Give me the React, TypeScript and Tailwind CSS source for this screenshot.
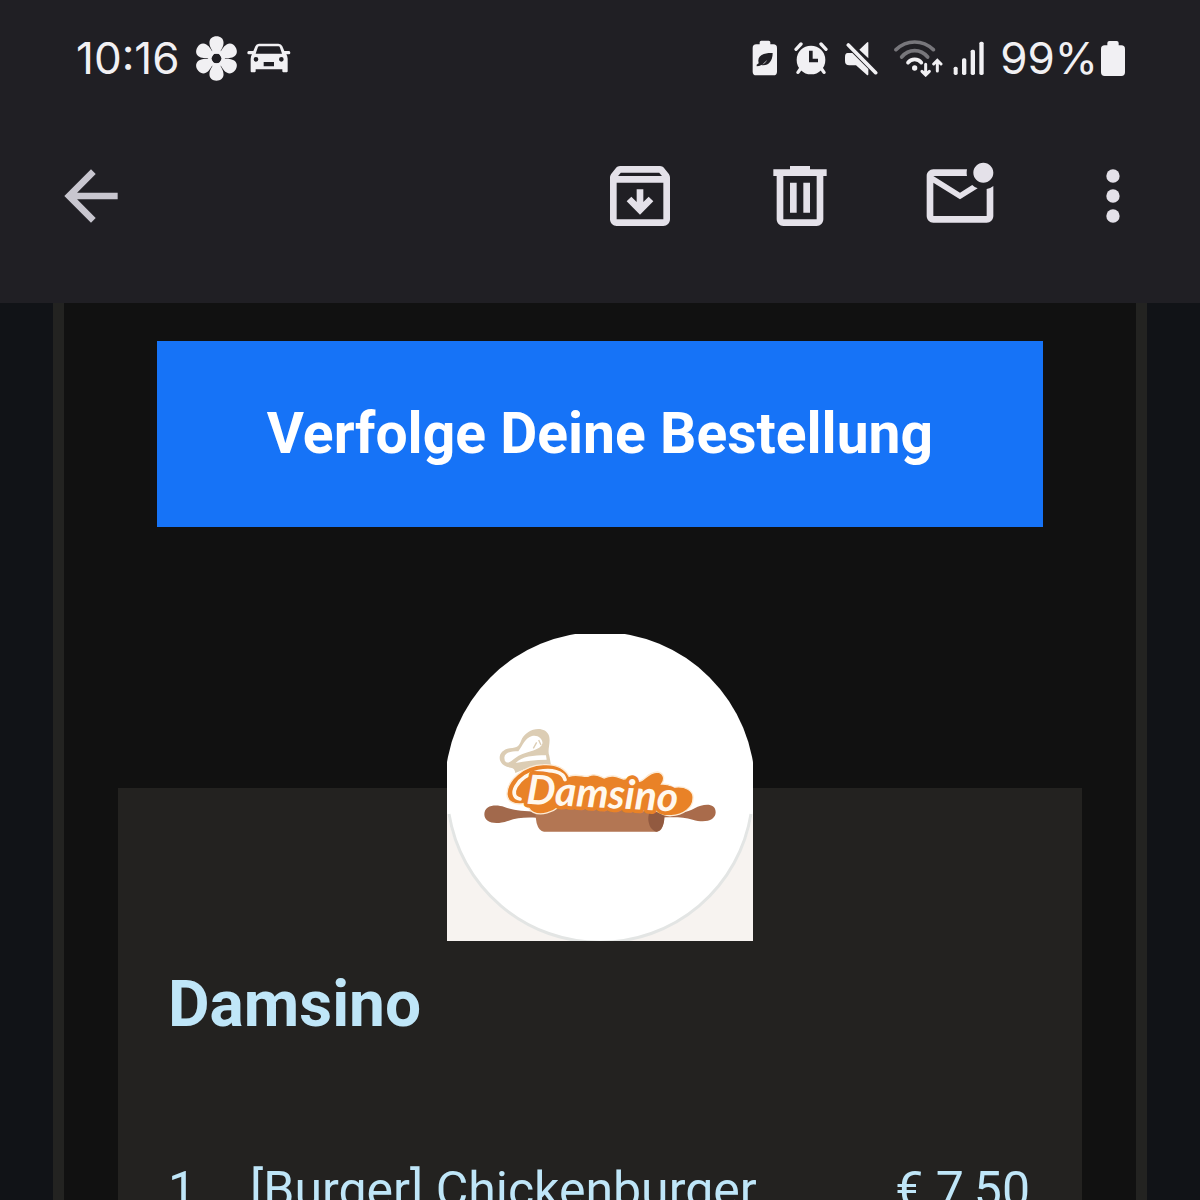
import type { ReactNode } from "react";

type OrderItem = {
  quantity: number;
  name: string;
  price: number;
};

const items: OrderItem[] = [{ quantity: 1, name: "[Burger] Chickenburger", price: 7.5 }];

const petals = [0, 60, 120, 180, 240, 300];

function formatPrice(value: number) {
  return `€ ${value.toFixed(2).replace(".", ",")}`;
}

function FlowerIcon() {
  return (
    <svg viewBox="-64 -67 128 134" className="h-[45px] w-[43px]" fill="currentColor" aria-hidden="true">
      {petals.map((angle) => (
        <path
          key={angle}
          transform={`rotate(${angle})`}
          d="M-9-14C-13-27-21-34-21-47C-21-59-12-66 0-66S21-59 21-47C21-34 13-27 9-14Z"
        />
      ))}
      <path fillRule="evenodd" d="M0-25a25 25 0 1 0 0 50a25 25 0 1 0 0-50ZM0-15a15 15 0 1 1 0 30a15 15 0 1 1 0-30Z" />
    </svg>
  );
}

function CarIcon() {
  return (
    <svg viewBox="560 70 135 90" className="h-[30px] w-[45px]" fill="currentColor" aria-hidden="true">
      <path
        fillRule="evenodd"
        d="M599 72h58q9 0 12 8l6 14h14q4 0 4 5t-4 5h-8q4 6 4 13v38q0 3-3 3h-10q-3 0-3-3v-6h-80v6q0 3-3 3h-9q-3 0-3-3v-38q0-7 4-13h-10q-4 0-4-5t4-5h14l6-14q3-8 11-8ZM600 80q-4 0-5 4l-6 18h79l-6-18q-1-4-5-4ZM590 112a7 7 0 1 0 0 14a7 7 0 1 0 0-14ZM666 112a7 7 0 1 0 0 14a7 7 0 1 0 0-14ZM613 127v13h31v-13Z"
      />
    </svg>
  );
}

function PowerSavingIcon() {
  return (
    <svg viewBox="34 45 78 108" className="h-[36px] w-[26px]" fill="currentColor" aria-hidden="true">
      <path
        fillRule="evenodd"
        d="M62 47h22q5 0 5 5v6h9q11 0 11 11v71q0 11-11 11H47q-11 0-11-11V69q0-11 11-11h10v-6q0-5 5-5ZM96 84c-25-1-44 6-43 24l1 7-6 4v5c16-1 20-9 32-20-5 9-11 13-18 16 19 4 34-10 34-36Z"
      />
    </svg>
  );
}

function AlarmIcon() {
  return (
    <svg viewBox="164 46 102 102" className="size-[34px]" fill="currentColor" aria-hidden="true">
      <path fillRule="evenodd" d="M215 60a43 43 0 1 0 0 86a43 43 0 1 0 0-86ZM209 75h11v24h16v11h-27Z" />
      <path
        d="M170 71l15-16M260 71l-15-16M183 130l-7 10M247 130l7 10"
        stroke="currentColor"
        strokeWidth="10"
        strokeLinecap="round"
      />
    </svg>
  );
}

function MuteIcon() {
  return (
    <svg viewBox="314 45 102 105" className="h-[35px] w-[34px]" fill="currentColor" aria-hidden="true">
      <path d="M387 50v47l-27-26 22-21q5-4 5 0ZM325 81h14l48 48v15q0 6-5 2l-32-28h-20q-13 0-13-13v-12q0-12 8-12Z" />
      <path d="M327 57l82 83" stroke="currentColor" strokeWidth="11" strokeLinecap="round" />
    </svg>
  );
}

function WifiIcon() {
  return (
    <svg
      viewBox="462 43 147 111"
      className="h-[37px] w-[49px]"
      fill="none"
      stroke="currentColor"
      strokeWidth="11"
      strokeLinecap="round"
      aria-hidden="true"
    >
      <path d="M468 72Q492 49 524 49T580 72" className="text-[#77767b]" stroke="currentColor" />
      <path d="M485 94Q501 75 524 75T563 94" className="text-[#77767b]" stroke="currentColor" />
      <path d="M504 111Q511 101 524 101T544 111" />
      <circle cx="524" cy="127" r="8" fill="currentColor" stroke="none" />
      <path d="M557 116v31M546 137l11 11 11-11M592 136v-31M581 115l11-11 11 11" strokeWidth="9" />
    </svg>
  );
}

function SignalIcon() {
  return (
    <svg viewBox="68 45 93 105" className="h-[35px] w-[31px]" fill="currentColor" aria-hidden="true">
      <rect x="70" y="122" width="12" height="25" rx="5" />
      <rect x="95" y="97" width="13" height="50" rx="5" />
      <rect x="121" y="71" width="13" height="76" rx="5" />
      <rect x="147" y="47" width="13" height="100" rx="5" />
    </svg>
  );
}

function BatteryIcon() {
  return (
    <svg viewBox="513 45 72 105" className="h-[35px] w-[24px]" fill="currentColor" aria-hidden="true">
      <path d="M538 45h22q6 0 6 6v7h8q11 0 11 11v70q0 11-11 11h-50q-11 0-11-11V69q0-11 11-11h8v-7q0-6 6-6Z" />
    </svg>
  );
}

type ActionButtonProps = {
  label: string;
  children: ReactNode;
};

function ActionButton({ label, children }: ActionButtonProps) {
  return (
    <button type="button" aria-label={label} className="size-20 shrink-0">
      <svg viewBox="0 0 24 24" className="size-20" fill="currentColor" aria-hidden="true">
        {children}
      </svg>
    </button>
  );
}

function StatusBar() {
  return (
    <div className="flex h-[116px] items-center justify-between pr-[75px] pl-[76px] font-['Inter',sans-serif] text-[44px] leading-[56px] text-[#f1f0f3]">
      <div className="flex items-center">
        <time className="mr-[15px]">10:16</time>
        <FlowerIcon />
        <span className="ml-2">
          <CarIcon />
        </span>
      </div>
      <div className="flex items-center gap-4">
        <PowerSavingIcon />
        <AlarmIcon />
        <MuteIcon />
        <div className="flex items-center gap-[10px]">
          <WifiIcon />
          <SignalIcon />
        </div>
        <div className="flex items-center gap-[3px]">
          <span>99%</span>
          <BatteryIcon />
        </div>
      </div>
    </div>
  );
}

function MailToolbar() {
  return (
    <nav className="flex h-[187px] items-center justify-between pr-[47px] pb-[27px] pl-[51px] text-[#e4e1e9]">
      <div className="flex text-[#c8c6cf]">
        <ActionButton label="Zurück">
          <path d="M20 11H7.83l5.59-5.59L12 4l-8 8 8 8 1.41-1.41L7.83 13H20v-2z" />
        </ActionButton>
      </div>
      <div className="flex items-center gap-20">
        <ActionButton label="Archivieren">
          <path
            fillRule="evenodd"
            d="M20.54 5.23l-1.39-1.68C18.88 3.21 18.47 3 18 3H6c-.47 0-.88.21-1.16.55L3.46 5.23C3.17 5.57 3 6.02 3 6.5V19c0 1.1.9 2 2 2h14c1.1 0 2-.9 2-2V6.5c0-.48-.17-.93-.46-1.27zM6.24 5h11.52l.83 1H5.42l.82-1zM5 19V8h14v11H5z"
          />
          <path d="M11 10h2v3.8l1.6-1.6 1.4 1.4-4 4-4-4 1.4-1.4 1.6 1.6z" />
        </ActionButton>
        <ActionButton label="Löschen">
          <path
            fillRule="evenodd"
            d="M9 3h6v1h5v2h-1v13c0 1.1-.9 2-2 2H7c-1.1 0-2-.9-2-2V6H4V4h5zM7 6v13h10V6zM9 8h2v9H9zM13 8h2v9h-2z"
          />
        </ActionButton>
        <div className="flex items-center gap-[73px]">
          <ActionButton label="Als ungelesen markieren">
            <path d="M22 8.98V18c0 1.1-.9 2-2 2H4c-1.1 0-2-.9-2-2V6c0-1.1.9-2 2-2h10.1c-.06.32-.1.66-.1 1 0 .34.04.68.1 1H4l8 5 3.67-2.29c.47.43 1.02.76 1.63.98L12 13 4 8v10h16V9.9c.74-.15 1.42-.48 2-.92zM16 5c0 1.66 1.34 3 3 3s3-1.34 3-3-1.34-3-3-3-3 1.34-3 3z" />
          </ActionButton>
          <ActionButton label="Weitere Optionen">
            <circle cx="12" cy="6" r="2" />
            <circle cx="12" cy="12" r="2" />
            <circle cx="12" cy="18" r="2" />
          </ActionButton>
        </div>
      </div>
    </nav>
  );
}

function RestaurantLogo() {
  return (
    <svg viewBox="0 0 306 307" className="h-[307px] w-[306px]" role="img" aria-label="Damsino">
      <rect y="153" width="306" height="154" fill="#f7f3f0" />
      <circle cx="153" cy="153" r="155" fill="#fff" />
      <path d="M2 180a153 153 0 0 0 302 0" fill="none" stroke="#e3e5e4" strokeWidth="3" />
      <svg x="23" y="81" width="260" height="130" viewBox="0 0 780 390">
        {/* rolling pin */}
        <path
          d="M43 298C43 270 78 267 103 276C130 286 160 288 200 290V308C165 306 140 308 113 318C75 331 43 323 43 298Z"
          fill="#a2694c"
        />
        <path
          d="M737 292C737 262 699 266 674 280C650 294 610 298 570 297V308C610 306 640 306 668 314C705 326 737 316 737 292Z"
          fill="#a96b4b"
        />
        <path d="M188 250H582V310Q580 350 560 350H222Q207 350 200 325Z" fill="#b37653" />
        <path d="M555 278C525 285 530 345 560 350C578 346 586 320 583 290Z" fill="#925a40" />
        {/* chef hat */}
        <path
          d="M136 174C135 164 131 159 122 158C80 153 77 107 119 100C144 98 147 92 153 78C166 40 224 28 237 62C243 84 231 106 238 122L243 150C205 151 170 158 136 174Z"
          fill="#dccdb4"
        />
        <path
          d="M103 128C104 111 125 109 145 109C158 91 166 68 186 63C204 58 220 73 217 86C213 98 199 103 185 108C165 115 148 119 136 129C125 137 118 145 109 142Q103 139 103 128Z"
          fill="#fff"
        />
        <path d="M137 144C156 124 190 121 228 121L230 134C195 134 166 139 137 144Z" fill="#fff" />
        <path d="M200 82l-10 18M206 75l7 15" stroke="#dccdb4" strokeWidth="4" />
        {/* lettering on its orange backing */}
        <path
          d="M111 235C112 197 159 151 220 149C263 146 288 164 297 184C322 174 342 188 356 183C378 173 391 185 403 189C430 175 447 189 461 192C478 188 495 195 509 199C528 194 531 173 563 171C583 175 585 193 575 207C597 206 602 212 611 217C645 211 672 227 669 250C670 277 639 301 604 302C577 304 564 289 552 284C530 291 510 285 499 282C481 286 470 282 457 278C441 286 426 280 414 276C399 284 386 278 374 274C355 284 336 276 322 272C300 282 282 276 269 274C249 291 215 304 190 292C172 284 176 269 164 265C135 272 109 260 111 235Z"
          fill="#e98227"
          stroke="#fdebd5"
          strokeWidth="4"
        />
        <path
          d="M150 252C112 246 138 184 205 170C245 162 280 170 285 194"
          fill="none"
          stroke="#fff8ee"
          strokeWidth="11"
          strokeLinecap="round"
        />
        <text
          x="168"
          y="266"
          transform="rotate(3 168 266)"
          fill="#fff8ee"
          stroke="#e98227"
          strokeWidth="22"
          strokeLinejoin="round"
          className="font-['Lato',sans-serif] text-[122px] font-bold italic [paint-order:stroke]"
        >
          Damsino
        </text>
      </svg>
    </svg>
  );
}

function OrderCard() {
  return (
    <section className="mt-[261px] flow-root bg-[#232220] px-[50px] pb-20 text-[#bfe6f8]">
      <div className="-mt-[154px] flex justify-center">
        <RestaurantLogo />
      </div>
      <h1 className="mt-7 text-[64px] leading-[72px] font-bold">Damsino</h1>
      <table className="mt-[119px] w-full text-left text-[50px] leading-[60px]">
        <tbody>
          {items.map((item) => (
            <tr key={item.name}>
              <td className="w-[82px] p-0">{item.quantity}</td>
              <td className="p-0">{item.name}</td>
              <td className="p-0 pr-0.5 text-right whitespace-nowrap">{formatPrice(item.price)}</td>
            </tr>
          ))}
        </tbody>
      </table>
    </section>
  );
}

export default function App() {
  return (
    <div className="flex h-screen flex-col overflow-hidden bg-[#111317] font-['Roboto',sans-serif]">
      <header className="shrink-0 bg-[#201f24]">
        <StatusBar />
        <MailToolbar />
      </header>
      <main className="min-h-0 flex-1 overflow-hidden px-[53px]">
        <article className="border-x-[11px] border-[#232321] bg-[#111111] px-[54px] pt-[38px]">
          <a
            href="#bestellung"
            className="mx-[39px] block bg-[#1673f7] py-[57px] text-center text-[57px] leading-[72px] font-bold text-white"
          >
            Verfolge Deine Bestellung
          </a>
          <OrderCard />
        </article>
      </main>
    </div>
  );
}
